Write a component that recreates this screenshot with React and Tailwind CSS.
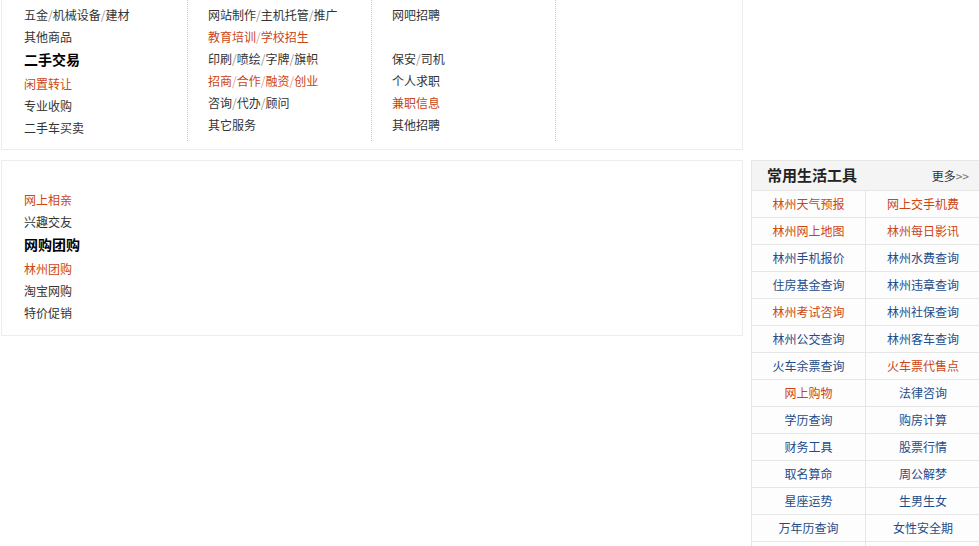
const ORANGE = 'text-[#cc4512]';
const DARK = 'text-[#333333]';

// each entry: [text, kind] kind: 'n' normal, 'o' orange, 'h' heading, '' blank
const COLS = [
  [
    ['五金/机械设备/建材', 'n'],
    ['其他商品', 'n'],
    ['二手交易', 'h'],
    ['闲置转让', 'o'],
    ['专业收购', 'n'],
    ['二手车买卖', 'n'],
  ],
  [
    ['网站制作/主机托管/推广', 'n'],
    ['教育培训/学校招生', 'o'],
    ['印刷/喷绘/字牌/旗帜', 'n'],
    ['招商/合作/融资/创业', 'o'],
    ['咨询/代办/顾问', 'n'],
    ['其它服务', 'n'],
  ],
  [
    ['网吧招聘', 'n'],
    ['', ''],
    ['保安/司机', 'n'],
    ['个人求职', 'n'],
    ['兼职信息', 'o'],
    ['其他招聘', 'n'],
  ],
];

const FRIENDS = [
  ['网上相亲', 'o'],
  ['兴趣交友', 'n'],
  ['网购团购', 'h'],
  ['林州团购', 'o'],
  ['淘宝网购', 'n'],
  ['特价促销', 'n'],
];

const TOOLS = [
  ['林州天气预报', true],
  ['网上交手机费', true],
  ['林州网上地图', true],
  ['林州每日影讯', true],
  ['林州手机报价', false],
  ['林州水费查询', false],
  ['住房基金查询', false],
  ['林州违章查询', false],
  ['林州考试咨询', true],
  ['林州社保查询', false],
  ['林州公交查询', false],
  ['林州客车查询', false],
  ['火车余票查询', false],
  ['火车票代售点', true],
  ['网上购物', true],
  ['法律咨询', false],
  ['学历查询', false],
  ['购房计算', false],
  ['财务工具', false],
  ['股票行情', false],
  ['取名算命', false],
  ['周公解梦', false],
  ['星座运势', false],
  ['生男生女', false],
  ['万年历查询', false],
  ['女性安全期', false],
];

function Slashed({ text }) {
  const parts = text.split('/');
  return parts.map((p, i) => (
    <span key={i}>
      {i > 0 && <span className="opacity-50">/</span>}
      {p}
    </span>
  ));
}

function Item({ text, kind }) {
  if (kind === 'h') {
    return <div className="mb-[3px] h-[22px] text-[14px] font-bold leading-[22px] text-black">{text}</div>;
  }
  if (!kind) return <div className="h-[22px]" />;
  return (
    <div className={`h-[22px] leading-[22px] ${kind === 'o' ? ORANGE : DARK}`}>
      <Slashed text={text} />
    </div>
  );
}

export default function App() {
  return (
    <div className="h-[546px] w-[979px] overflow-hidden bg-white text-[12px] font-['Noto_Sans_CJK_SC',sans-serif]">
      <div className="ml-px flex w-[742px] border-x border-b border-[#ececec] pb-[8px]">
        {COLS.map((col, i) => (
          <div
            key={i}
            className={`h-[141px] border-r border-dotted border-[#c8c8c8] pt-[4px] ${
              i === 0 ? 'w-[186px] pl-[22px]' : 'w-[184px] pl-5'
            }`}
          >
            {col.map(([t, k], j) => (
              <Item key={j} text={t} kind={k} />
            ))}
          </div>
        ))}
      </div>

      <div className="mt-[10px] flex items-start">
        <div className="ml-px h-[176px] w-[742px] border border-[#ececec] pl-[22px] pt-[28px]">
          {FRIENDS.map(([t, k], j) => (
            <Item key={j} text={t} kind={k} />
          ))}
        </div>

        <div className="ml-[8px] w-[228px] border-l border-t border-[#e6e6e6] bg-[#e6e6e6]">
          <div className="flex h-[29px] items-center justify-between bg-[#f4f4f4] pl-[15px] pr-[10px]">
            <span className="text-[15px] font-bold text-[#222]">常用生活工具</span>
            <span className="text-[#333]">
              更多<span className="text-[#777]">&gt;&gt;</span>
            </span>
          </div>
          <div className="mt-px grid grid-cols-[113px_114px] gap-px">
            {TOOLS.map(([t, hot]) => (
              <div
                key={t}
                className={`h-[26px] bg-[#fdfdfd] text-center leading-[26px] ${hot ? ORANGE : 'text-[#1d4c8a]'}`}
              >
                {t}
              </div>
            ))}
            <div className="h-[6px] bg-[#fdfdfd]" />
            <div className="h-[6px] bg-[#fdfdfd]" />
          </div>
        </div>
      </div>
    </div>
  );
}
